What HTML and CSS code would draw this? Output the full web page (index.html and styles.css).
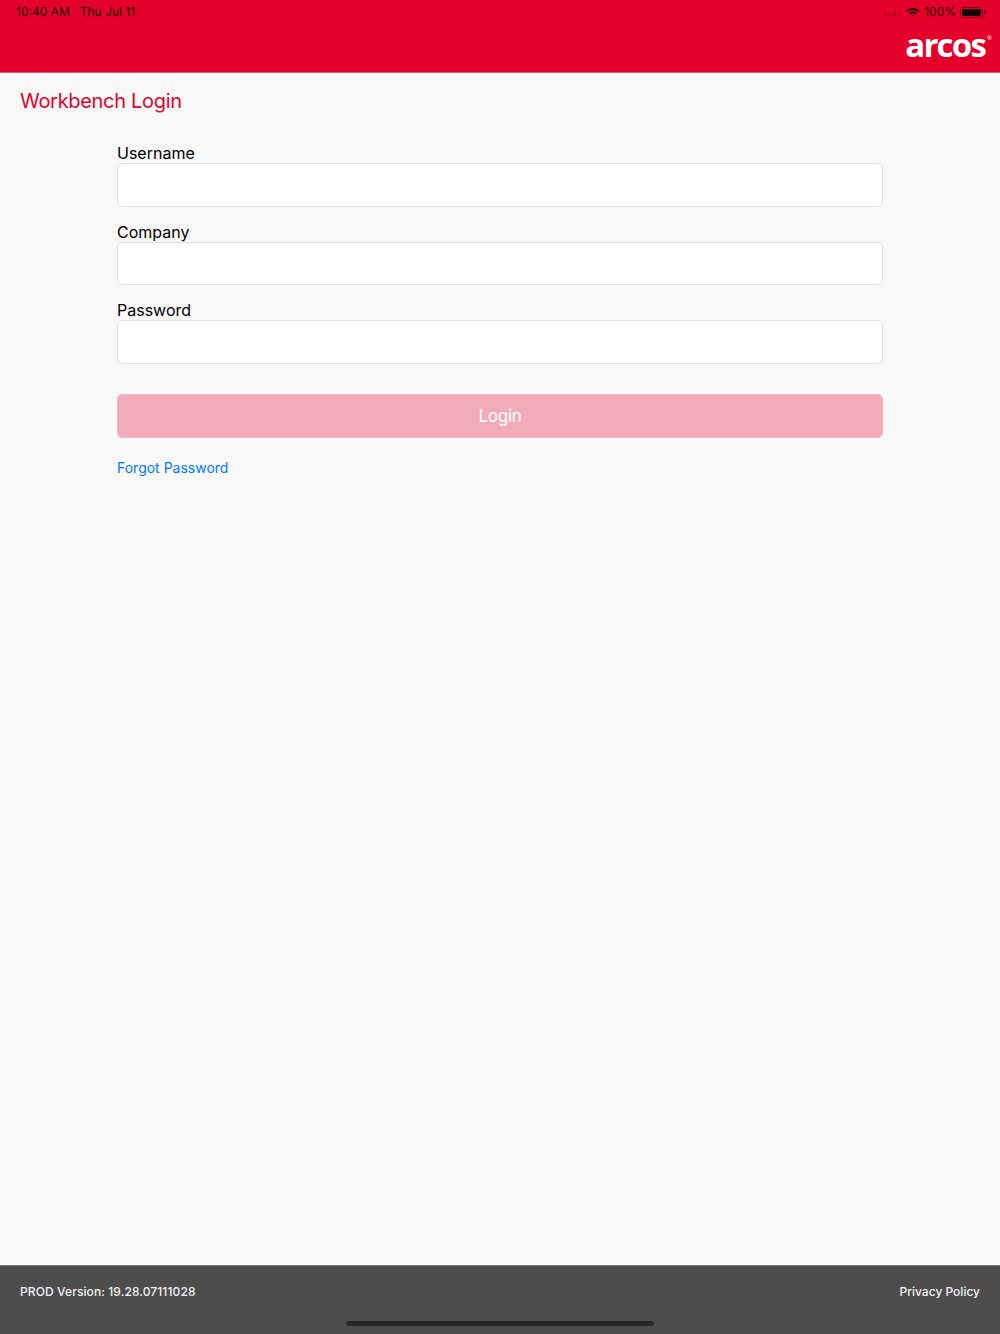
FILE: index.html
```html
<!DOCTYPE html>
<html lang="en">
<head>
    <meta charset="UTF-8">
    <title>Workbench Login</title>
    <link rel="stylesheet" href="styles.css">
</head>
<body>
    <header class="top">
        <div class="status">
            <div class="status-left">
                <span>10:40 AM</span>
                <span>Thu Jul 11</span>
            </div>
            <div class="status-right">
                <span class="signal"><i></i><i></i><i></i><i></i></span>
                <svg class="wifi" width="14" height="11" viewBox="0 0 14 11">
                    <path d="M7 1C4.600 1 2.400 1.900 .7 3.500L2 4.900C3.300 3.600 5.100 2.900 7 2.900S10.700 3.600 12 4.900L13.300 3.500C11.600 1.900 9.400 1 7 1Z"/>
                    <path d="M7 4.400C5.600 4.400 4.300 4.900 3.300 5.900L4.600 7.200C5.200 6.600 6.100 6.300 7 6.300S8.800 6.600 9.400 7.200L10.700 5.900C9.700 4.900 8.400 4.400 7 4.400Z"/>
                    <path d="M7 7.700C6.500 7.700 6.100 7.900 5.800 8.200L7 9.800L8.200 8.200C7.900 7.900 7.500 7.700 7 7.700Z"/>
                </svg>
                <span>100%</span>
                <span class="battery"><b></b></span>
            </div>
        </div>
        <div class="logo">arcos<sup>®</sup></div>
    </header>

    <main class="content">
        <h1 class="title">Workbench Login</h1>
        <form class="login">
            <label class="field">Username<input type="text"></label>
            <label class="field">Company<input type="text"></label>
            <label class="field">Password<input type="password"></label>
            <button type="button" class="btn">Login</button>
            <a class="forgot" href="#">Forgot Password</a>
        </form>
    </main>

    <footer class="bottom">
        <span class="version">PROD Version: 19.28.07111028</span>
        <a href="#">Privacy Policy</a>
        <div class="home-bar"></div>
    </footer>
</body>
</html>
```

FILE: styles.css
```css
* {
    margin: 0;
    padding: 0;
    box-sizing: border-box;
}
body {
    display: flex;
    flex-direction: column;
    height: 1334px;
    background-color: #f8f8f8;
    font-family: Inter, "Liberation Sans", sans-serif;
    overflow: hidden;
}
a {
    text-decoration: none;
}

/* red header */
.top {
    height: 73px;
    padding: 5px 8px 0 16px;
    background-color: #e4002b;
    border-bottom: 1px solid #e8556f;
}
.status {
    display: flex;
    justify-content: space-between;
    height: 14px;
    font-size: 12px;
    line-height: 14px;
    color: #1c0005;
}
.status-left {
    display: flex;
    gap: 10px;
}
.status-right {
    display: flex;
    align-items: center;
    gap: 4px;
    padding-right: 9px;
}
.signal {
    display: flex;
    gap: 2px;
    margin-right: 2px;
    padding-top: 5px;
}
.signal i {
    width: 2.500px;
    height: 2.500px;
    border-radius: 50%;
    background-color: #a8001f;
}
.wifi {
    fill: #14000a;
}
.battery {
    position: relative;
    width: 23px;
    height: 11px;
    padding: 1px;
    border: 1px solid #8a0019;
    border-radius: 3px;
}
.battery b {
    display: block;
    height: 100%;
    border-radius: 1.500px;
    background-color: #14000a;
}
.battery::after {
    content: "";
    position: absolute;
    right: -4px;
    top: 2.500px;
    width: 2px;
    height: 4px;
    background-color: #8a0019;
}
.logo {
    margin-top: 8px;
    text-align: right;
    font-family: "Open Sans", sans-serif;
    font-weight: 700;
    font-size: 33px;
    line-height: 36px;
    letter-spacing: -1.800px;
    color: #fff;
}
.logo sup {
    margin-left: 2px;
    font-size: 6px;
    font-weight: 400;
    vertical-align: 17px;
    line-height: 0;
    letter-spacing: 0;
}

/* form */
.content {
    flex: 1;
    padding: 16px 20px 0;
}
.title {
    font-size: 20px;
    line-height: 25px;
    font-weight: 400;
    letter-spacing: -0.300px;
    color: #e4002b;
}
.login {
    display: flex;
    flex-direction: column;
    gap: 15px;
    width: 766px;
    margin: 29px auto 0;
}
.field {
    display: block;
    font-size: 16px;
    line-height: 20px;
    color: #000;
}
.field input {
    display: block;
    width: 100%;
    height: 43.500px;
    background-color: #fff;
    border: 1px solid #e0e0e0;
    border-radius: 5px;
}
.btn {
    height: 43.500px;
    margin-top: 15.500px;
    background-color: #f2acb9;
    border: 1px solid #f4b6c2;
    border-radius: 5px;
    font-family: inherit;
    font-size: 17px;
    letter-spacing: -0.300px;
    color: #fff;
}
.forgot {
    margin-top: 6px;
    font-size: 14px;
    line-height: 18px;
    color: #007aff;
}

/* footer */
.bottom {
    position: relative;
    display: flex;
    justify-content: space-between;
    height: 69px;
    padding: 18px 20px 0;
    background-color: #4d4d4d;
    border-top: 1px solid #777;
    font-size: 12px;
    line-height: 16px;
    font-weight: 500;
    color: #f2f2f2;
}
.bottom a {
    color: #f2f2f2;
}
.version {
    letter-spacing: 0.100px;
}
.home-bar {
    position: absolute;
    left: 346px;
    bottom: 8px;
    width: 308px;
    height: 5px;
    border-radius: 3px;
    background-color: #272727;
}
```
